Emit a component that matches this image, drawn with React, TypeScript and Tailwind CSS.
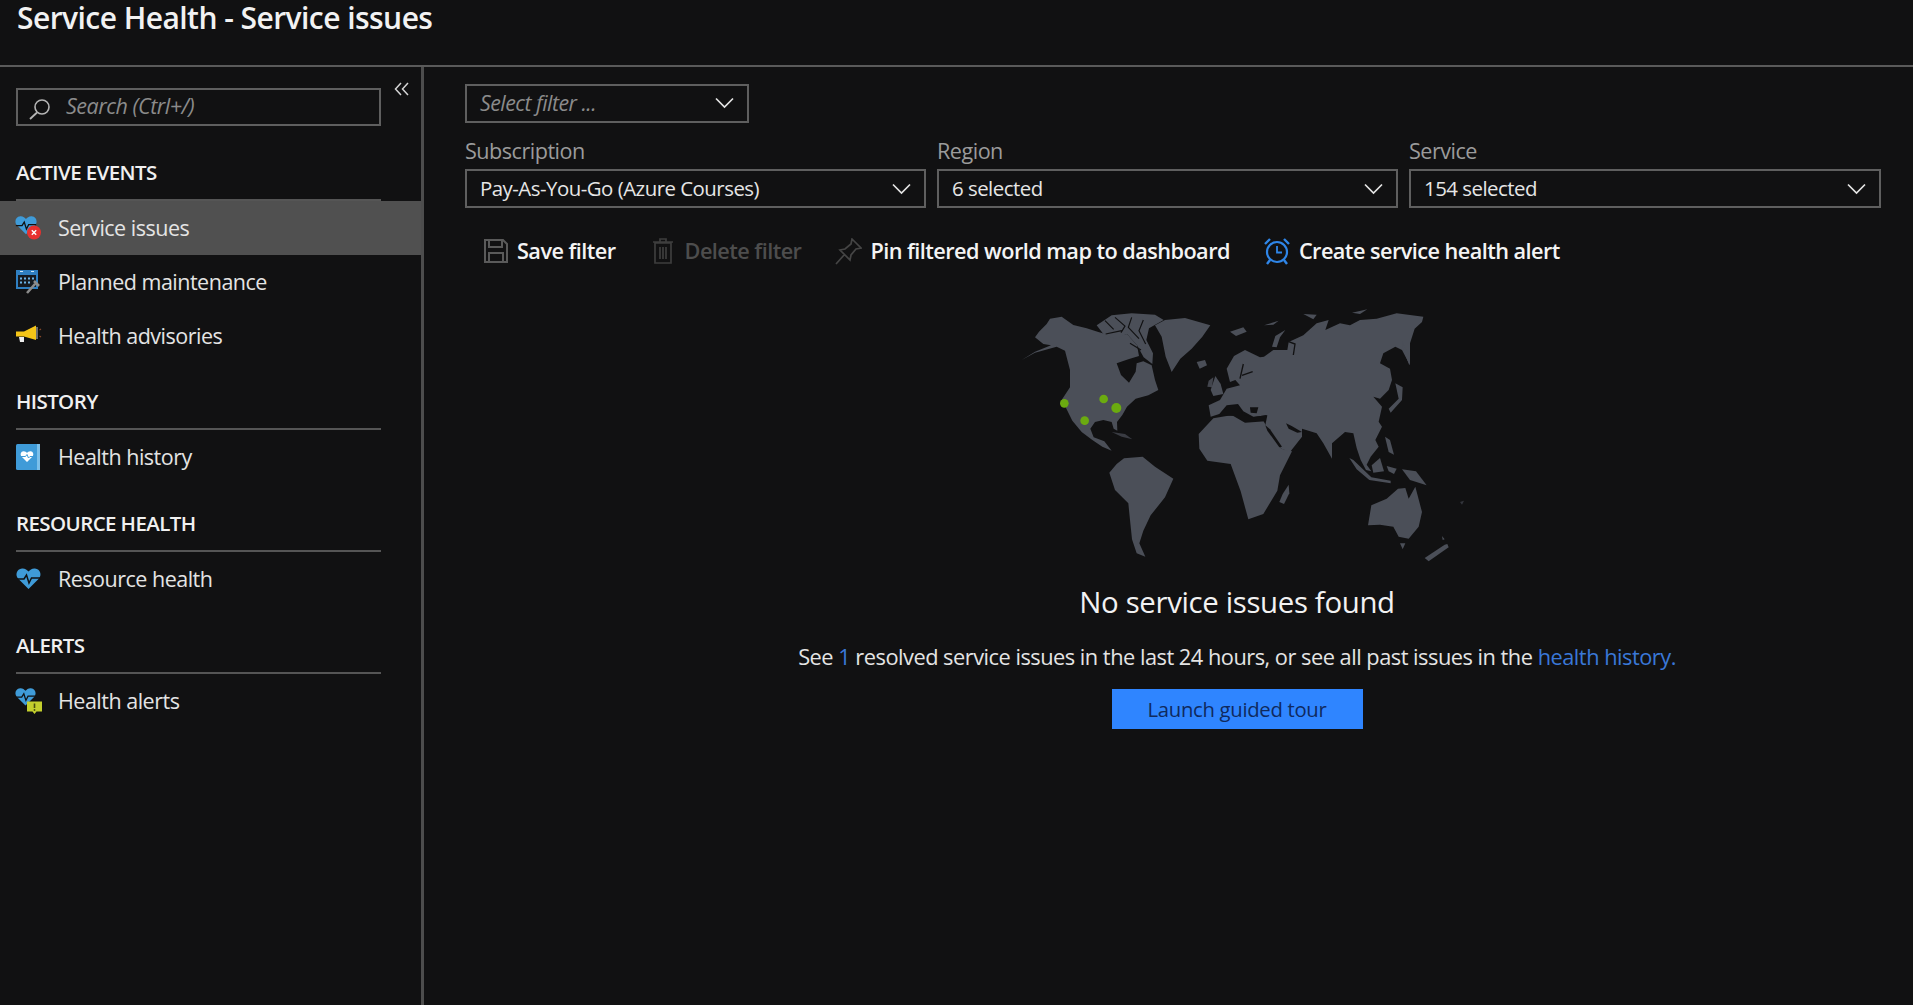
import React from "react";

const font = { fontFamily: '"Open Sans", "Noto Sans", sans-serif' };

function Heart({ x = 0, y = 0, s = 1 }: { x?: number; y?: number; s?: number }) {
  return (
    <g transform={`translate(${x} ${y}) scale(${s})`}>
      <path d="M12.5 22 L2 11.5 C-1 8 0.5 2 6 1.5 C9 1.2 11 3 12.5 4.5 C14 3 16 1.2 19 1.5 C24.5 2 26 8 23 11.5 Z" fill="#3f9bd8" />
      <path d="M1 12 H8 L10.5 8 L13 16 L15.5 11 H24" fill="none" stroke="#111" strokeWidth="1.5" />
    </g>
  );
}

function ServiceIcon() {
  return (
    <svg width="28" height="28" viewBox="0 0 28 28">
      <Heart x={0} y={1} s={0.88} />
      <circle cx="19" cy="18.5" r="7" fill="#e8312f" />
      <path d="M16.8 16.3 L21.2 20.7 M21.2 16.3 L16.8 20.7" stroke="#fff" strokeWidth="1.4" />
    </svg>
  );
}

function PlannedIcon() {
  return (
    <svg width="28" height="28" viewBox="0 0 28 28">
      <rect x="1" y="2" width="22" height="19" fill="#2f7fc1" />
      <rect x="3" y="7" width="18" height="12" fill="#151a20" />
      <path d="M5 9.5h2v2h-2zM9 9.5h2v2h-2zM13 9.5h2v2h-2zM17 9.5h2v2h-2zM5 13.5h2v2h-2zM9 13.5h2v2h-2zM13 13.5h2v2h-2z" fill="#6cb3e6" />
      <path d="M5 3.5h3M16 3.5h3" stroke="#cde6f7" strokeWidth="1.2" />
      <path d="M12 25 L20 16 M19 13 L24 18" stroke="#8b8b8b" strokeWidth="2.6" fill="none" />
    </svg>
  );
}

function MegaphoneIcon() {
  return (
    <svg width="28" height="28" viewBox="0 0 28 28">
      <path d="M1 9.5 L9 9.5 L21 3.5 V18 L9 14.5 H1 Z" fill="#f5c518" />
      <path d="M4 15 H9 L9 20 H5 Z" fill="#ededed" />
      <rect x="21" y="5" width="2" height="12" fill="#6d6d6d" />
      <path d="M24.5 8 L26 7 M24.5 14 L26 15" stroke="#8a4a2a" strokeWidth="1.2" />
    </svg>
  );
}

function HistoryIcon() {
  return (
    <svg width="28" height="28" viewBox="0 0 28 28">
      <rect x="1" y="1" width="24" height="26" rx="1.5" fill="#3f9bd8" />
      <path d="M22 1 H25 V27 H22 Z" fill="#7cc0ea" />
      <path d="M12 19 L6.5 13.5 C4.8 11.5 5.8 8.5 8.5 8.3 C10 8.2 11.2 9 12 10 C12.8 9 14 8.2 15.5 8.3 C18.2 8.5 19.2 11.5 17.5 13.5 Z" fill="#fff" />
      <path d="M6 13.5 H10.5 L12 11.5 L13.5 15 L15 13.5 H18" fill="none" stroke="#3f9bd8" strokeWidth="1" />
    </svg>
  );
}

function ResourceIcon() {
  return (
    <svg width="28" height="28" viewBox="0 0 28 28">
      <Heart x={1} y={2} s={1} />
    </svg>
  );
}

function AlertsIcon() {
  return (
    <svg width="28" height="28" viewBox="0 0 28 28">
      <Heart x={0} y={0} s={0.84} />
      <path d="M12 14.5 H27 V24.5 H21.5 L19.5 27 L17.5 24.5 H12 Z" fill="#c3cf2d" />
      <path d="M19.5 16.5 V21" stroke="#4a4f10" strokeWidth="1.6" />
      <circle cx="19.5" cy="23" r="0.9" fill="#4a4f10" />
    </svg>
  );
}

function Chevron() {
  return (
    <svg width="19" height="12" viewBox="0 0 19 12" fill="none">
      <path d="M1 1.5 L9.5 10 L18 1.5" stroke="#e4e4e4" strokeWidth="1.7" />
    </svg>
  );
}

function WorldMap() {
  return (
    <svg viewBox="0 0 1440 870" width="480" height="290" className="block shrink-0 blur-[0.5px]">
      <g fill="#4b4f58">
        {/* North America, Greenland */}
        <g transform="translate(45 30)">
          <path d="M20 180 L60 155 L108 136 L85 132 L60 112 L72 95 L95 72 L105 56 L140 50 L175 75 L215 85 L250 96 L300 110 L336 102 L366 136 L372 168 L340 178 L305 190 L318 225 L342 248 L362 215 L365 190 L385 184 L410 196 L420 240 L430 270 L400 286 L362 296 L336 320 L322 345 L306 366 L307 392 L296 386 L290 366 L265 360 L240 366 L226 386 L236 412 L268 424 L290 452 L262 440 L232 420 L200 396 L172 362 L152 322 L136 306 L165 262 L165 210 L150 152 L125 140 L60 158 Z" />
          <path d="M245 76 L290 46 L350 40 L420 44 L446 60 L402 85 L394 120 L414 160 L412 192 L386 172 L366 136 L336 102 L300 116 L265 102 Z" />
          <path d="M420 76 L450 60 L510 54 L586 76 L562 110 L530 146 L496 176 L470 216 L452 170 L440 110 Z" />
          <path d="M545 186 L570 180 L576 196 L554 206 Z" />
          <path d="M290 396 L330 402 L352 418 L320 410 Z" opacity="0.7" />
        </g>
        <g fill="none" stroke="#111112" strokeWidth="3.5">
          <g transform="translate(45 30)">
            <path d="M270 62 L296 88 M300 52 L330 78 L318 98 M350 52 L340 82 L372 116 M385 60 L372 92 L392 132 M272 102 L320 92 M345 130 L378 150" />
          </g>
        </g>
        {/* South America */}
        <path d="M328 548 L350 522 L372 505 L428 500 L465 530 L520 566 L495 622 L452 676 L430 722 L418 760 L436 800 L410 790 L396 748 L390 690 L385 640 L345 600 Z" />
        {/* Africa */}
        <path d="M596 432 L640 385 L702 374 L790 392 L812 432 L844 476 L876 484 L840 556 L832 602 L790 672 L745 688 L722 604 L692 522 L622 512 L598 476 Z" />
        <path d="M848 612 L866 584 L868 610 L852 642 L838 636 Z" />
        {/* UK, Ireland */}
        <path d="M632 300 L646 258 L662 282 L670 312 L640 318 Z" />
        <path d="M626 272 L640 262 L636 292 L622 290 Z" opacity="0.85" />
        {/* Eurasia */}
        <g transform="translate(630 30)">
          <path d="M-4 316 L30 300 L50 266 L90 256 L76 240 L60 246 L50 206 L72 168 L105 150 L150 172 L162 170 L190 150 L232 150 L236 126 L280 106 L320 70 L356 60 L346 90 L390 70 L420 76 L450 60 L500 56 L560 40 L640 50 L636 66 L614 86 L600 130 L600 196 L576 150 L556 140 L520 160 L510 190 L540 206 L546 240 L536 270 L510 296 L490 290 L516 320 L506 365 L516 380 L496 420 L506 440 L482 470 L470 494 L484 514 L468 510 L452 480 L440 444 L430 400 L405 396 L366 430 L366 476 L340 430 L320 400 L276 386 L276 410 L240 456 L214 446 L166 376 L172 346 L130 350 L100 334 L84 312 L50 316 L28 342 L2 350 Z" />
          <path d="M60 95 L100 82 L110 95 L78 108 Z" />
          <path d="M162 76 L206 62 L190 74 Z" />
          <path d="M280 42 L320 44 L310 58 Z" />
          <path d="M426 38 L472 28 L450 42 Z" />
          <path d="M186 140 L196 108 L226 90 L210 112 L200 142 Z" />
          <path d="M576 125 L600 170 L598 196 L580 150 Z" />
          <path d="M556 250 L578 262 L576 300 L542 338 L536 326 L566 296 Z" />
        </g>
        <g transform="translate(630 30)" fill="none" stroke="#111112" strokeWidth="4">
          <path d="M100 192 L90 236 M128 215 L96 226 M228 122 L255 132 L250 165" />
        </g>
        <g transform="translate(630 30)" fill="#111112">
          <path d="M26 345 L54 318 L84 316 L100 344 L130 352 L170 345 L166 364 L105 368 L70 348 Z" />
          <path d="M120 322 L145 322 L140 340 L122 338 Z" />
          <path d="M166 376 L180 388 L216 440 L208 442 L172 392 Z" />
          <path d="M228 370 L245 378 L276 396 L262 398 L236 386 Z" />
        </g>
        {/* SE Asia, Oceania */}
        <g transform="translate(990 420)">
          <path d="M58 84 L70 90 L124 142 L182 152 L182 160 L118 150 L80 118 Z" />
          <path d="M125 106 L150 84 L162 124 L130 128 Z" />
          <path d="M170 108 L200 116 L192 132 L176 124 Z" />
          <path d="M165 20 L180 30 L192 74 L176 66 Z" />
          <path d="M216 118 L258 124 L290 166 L240 150 Z" />
          <path d="M114 286 L124 226 L170 206 L204 176 L226 174 L236 206 L256 170 L276 246 L266 290 L236 326 L206 320 L190 290 L150 284 Z" />
          <path d="M210 340 L226 340 L218 358 Z" />
          <path d="M284 384 L344 344 L352 342 L356 352 L296 394 Z" />
          <path d="M336 318 L344 328 L338 330 Z" />
          <path d="M390 216 L402 212 L396 224 Z" opacity="0.6" />
        </g>
      </g>
      <g fill="#6bab10">
        <circle cx="193" cy="340" r="13" />
        <circle cx="311" cy="327" r="13" />
        <circle cx="349" cy="354" r="15" />
        <circle cx="254" cy="392" r="13" />
      </g>
    </svg>
  );
}

const Row = ({ icon, label, active }: { icon: React.ReactNode; label: string; active?: boolean }) => (
  <div className={`flex h-[54px] items-center pl-[15px] ${active ? "bg-[#505050]" : ""}`}>
    <span className="w-[43px] shrink-0">{icon}</span>
    <span className="text-[21.5px] tracking-[-0.5px] text-[#e4e4e4]">{label}</span>
  </div>
);

const Heading = ({ children }: { children: string }) => (
  <div className="ml-4 flex h-[50px] w-[365px] items-center border-b-2 border-[#555] pb-[5px] text-[20.5px] font-semibold tracking-[-0.6px] text-[#f0f0f0]">
    {children}
  </div>
);

const Field = ({ label, value }: { label: string; value: string }) => (
  <div className="flex flex-col">
    <div className="flex h-[35px] items-center text-[21.6px] tracking-[-0.5px] text-[#9b9b9b]">{label}</div>
    <div className="flex h-[39px] items-center justify-between border-2 border-[#5f5f5f] pl-[13px] pr-[13px] text-[20.4px] tracking-[-0.5px] text-[#e6e6e6]">
      <span>{value}</span>
      <Chevron />
    </div>
  </div>
);

export default function App() {
  return (
    <div className="flex h-screen w-full flex-col overflow-hidden bg-[#111112] text-white" style={font}>
      <header className="h-[67px] shrink-0 border-b-2 border-[#5a5a5a] pl-[17px]">
        <div className="h-[36px] text-[30px] font-semibold leading-[35px] tracking-[-0.55px] text-[#f2f2f2]">
          Service Health - Service issues
        </div>
      </header>

      <div className="flex min-h-0 flex-1">
        <aside className="w-[424px] shrink-0 border-r-[3px] border-[#4d4d4d]">
          <div className="flex items-start pt-[21px]">
            <div className="ml-4 flex h-[38px] w-[365px] items-center border-2 border-[#5f5f5f] pb-[2px] pl-[10px] text-[21.5px] italic tracking-[-0.5px] text-[#8b8b8b]">
              <svg width="24" height="24" viewBox="0 0 24 24" fill="none" className="mr-[14px] mt-[5px] shrink-0">
                <circle cx="14" cy="10" r="7" stroke="#b5b5b5" strokeWidth="1.6" />
                <path d="M9 15.5 L2 22" stroke="#b5b5b5" strokeWidth="1.8" />
              </svg>
              Search (Ctrl+/)
            </div>
            <svg width="16" height="16" viewBox="0 0 16 16" fill="none" className="ml-[13px] mt-[-7px]">
              <path d="M7 2 L1.5 8 L7 14 M14 2 L8.5 8 L14 14" stroke="#d5d5d5" strokeWidth="1.5" />
            </svg>
          </div>

          <div className="mt-[25px]">
            <Heading>ACTIVE EVENTS</Heading>
            <Row icon={<ServiceIcon />} label="Service issues" active />
            <Row icon={<PlannedIcon />} label="Planned maintenance" />
            <Row icon={<MegaphoneIcon />} label="Health advisories" />
          </div>
          <div className="mt-[17px]">
            <Heading>HISTORY</Heading>
            <Row icon={<HistoryIcon />} label="Health history" />
          </div>
          <div className="mt-[18px]">
            <Heading>RESOURCE HEALTH</Heading>
            <Row icon={<ResourceIcon />} label="Resource health" />
          </div>
          <div className="mt-[18px]">
            <Heading>ALERTS</Heading>
            <Row icon={<AlertsIcon />} label="Health alerts" />
          </div>
        </aside>

        <main className="min-w-0 flex-1 pl-[41px] pr-8 pt-[17px]">
          <div className="flex h-[39px] w-[284px] items-center justify-between border-2 border-[#5f5f5f] pb-[1px] pl-[13px] pr-[13px] text-[21.3px] italic tracking-[-0.5px] text-[#8b8b8b]">
            <span>Select filter ...</span>
            <Chevron />
          </div>

          <div className="mt-[11px] grid grid-cols-[461px_461px_1fr] gap-x-[11px]">
            <Field label="Subscription" value="Pay-As-You-Go (Azure Courses)" />
            <Field label="Region" value="6 selected" />
            <Field label="Service" value="154 selected" />
          </div>

          <div className="mt-[21px] flex h-[44px] items-center pl-[18px] text-[21.7px] font-semibold tracking-[-0.55px] text-[#f4f4f4]">
            <svg width="26" height="26" viewBox="0 0 26 26" fill="none" className="mr-[8px] shrink-0">
              <path d="M2 2 H20 L24 6 V24 H2 Z" stroke="#5a5a5a" strokeWidth="2" />
              <path d="M6 2 V9 H19 V2 M6 24 V15 H20 V24" stroke="#5a5a5a" strokeWidth="2" />
            </svg>
            <span>Save filter</span>
            <svg width="24" height="26" viewBox="0 0 24 26" fill="none" className="ml-[35px] mr-[10px] shrink-0">
              <path d="M4 5 H20 V25 H4 Z M2 4 H22 M9 4 V1 H15 V4 M9 9 V21 M12 9 V21 M15 9 V21" stroke="#3e3e3e" strokeWidth="1.7" />
            </svg>
            <span className="text-[#4d4d4d]">Delete filter</span>
            <svg width="27" height="27" viewBox="0 0 27 27" fill="none" className="ml-[34px] mr-[8px] shrink-0">
              <path d="M1 26 L10 16 M17 1 L26 10 L21 11 L16 17 L15 22 L5 12 L10 11 L16 6 Z" stroke="#454545" strokeWidth="1.7" />
            </svg>
            <span>Pin filtered world map to dashboard</span>
            <svg width="28" height="28" viewBox="0 0 28 28" fill="none" className="ml-[33px] mr-[8px] shrink-0">
              <circle cx="14" cy="15" r="10" stroke="#2f86e8" strokeWidth="2.2" />
              <path d="M14 9 V15.5 H19" stroke="#2f86e8" strokeWidth="1.8" />
              <path d="M2 7 L7 2 M26 7 L21 2 M7 23 L4 27 M21 23 L24 27" stroke="#2f86e8" strokeWidth="2.4" />
            </svg>
            <span>Create service health alert</span>
          </div>

          <div className="ml-[322px] mt-[17px] flex w-[900px] flex-col items-center">
            <div className="ml-[6px]">
              <WorldMap />
            </div>
            <div className="mt-[2px] text-[29.4px] leading-[40px] tracking-[-0.35px] text-[#f2f2f2]">No service issues found</div>
            <div className="mt-[21px] whitespace-nowrap text-[21.8px] leading-[28px] tracking-[-0.5px] text-[#e4e4e4]">
              See <span className="text-[#3a78d8]">1</span> resolved service issues in the last 24 hours, or see all past issues in the{" "}
              <span className="text-[#3a78d8]">health history.</span>
            </div>
            <button className="mt-[18px] h-[40px] w-[251px] bg-[#2f85ff] text-[20.3px] tracking-[-0.3px] text-[#0f2a5e]">Launch guided tour</button>
          </div>
        </main>
      </div>
    </div>
  );
}
